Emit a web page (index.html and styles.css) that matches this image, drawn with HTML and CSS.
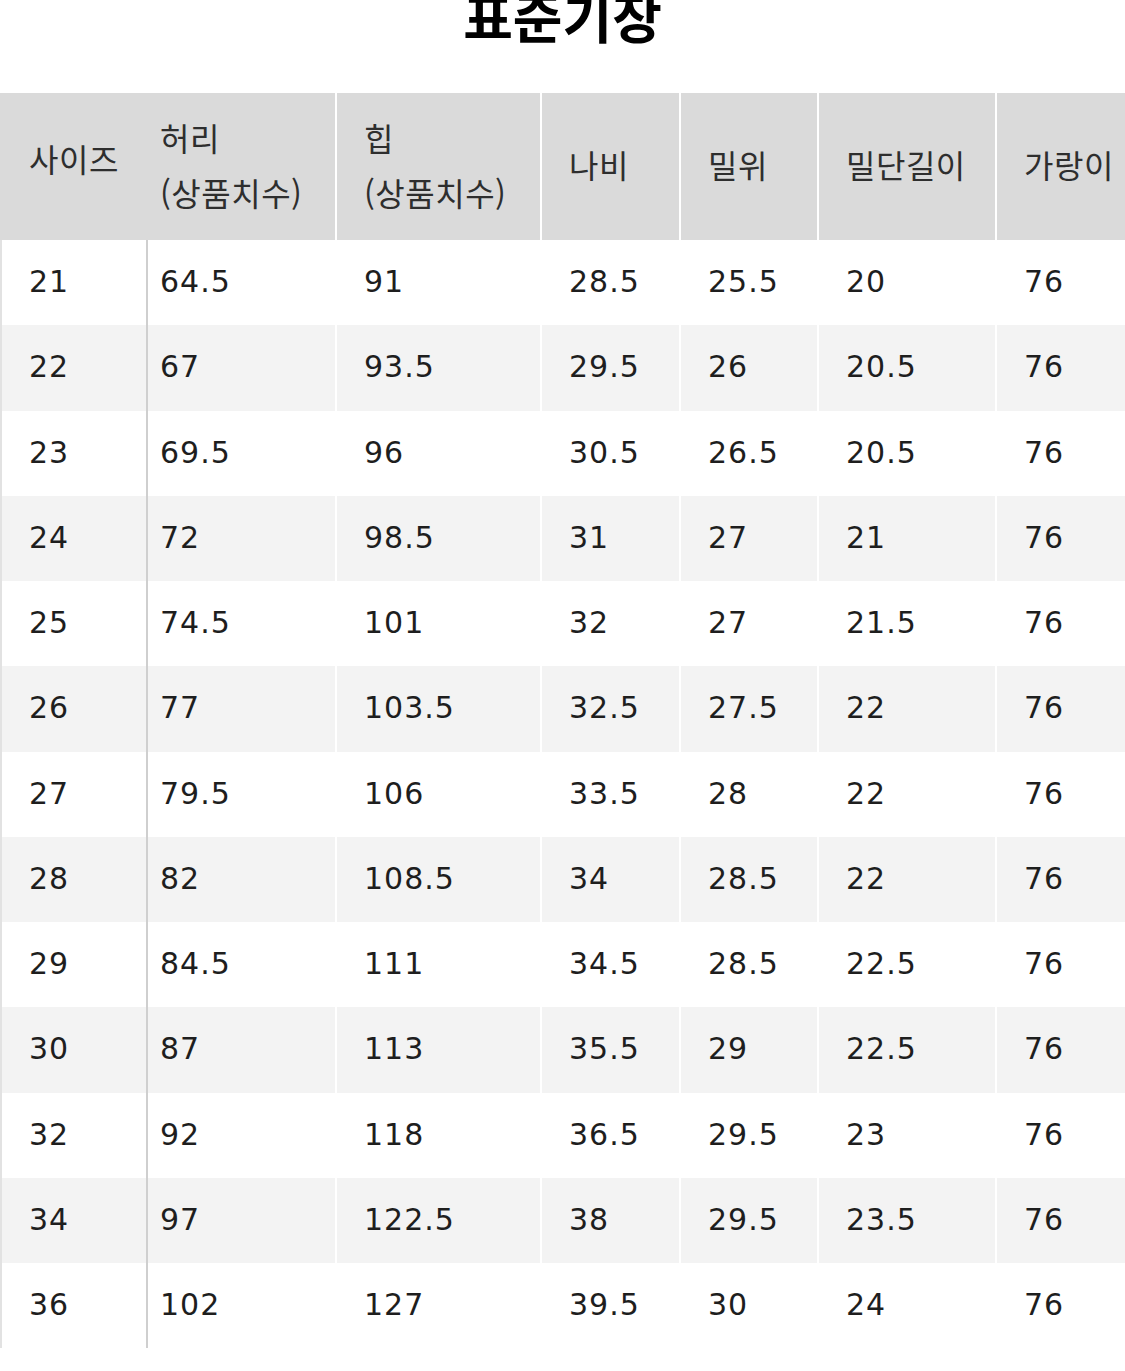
FILE: index.html
```html
<!DOCTYPE html>
<html lang="ko">
<head>
<meta charset="utf-8">
<title>표준기장</title>
<link rel="stylesheet" href="styles.css">
</head>
<body>
<div class="title-wrap"><h1 class="title">표준기장</h1></div>
<table class="size-table">
  <colgroup>
    <col class="c1"><col class="c2"><col class="c3"><col class="c4"><col class="c5"><col class="c6"><col class="c7">
  </colgroup>
  <thead>
    <tr>
      <th class="first">사이즈</th>
      <th class="second">허리<br>(상품치수)</th>
      <th>힙<br>(상품치수)</th>
      <th>나비</th>
      <th>밀위</th>
      <th>밀단길이</th>
      <th>가랑이</th>
    </tr>
  </thead>
  <tbody>
    <tr><td class="first">21</td><td class="second">64.5</td><td>91</td><td>28.5</td><td>25.5</td><td>20</td><td>76</td></tr>
    <tr><td class="first">22</td><td class="second">67</td><td>93.5</td><td>29.5</td><td>26</td><td>20.5</td><td>76</td></tr>
    <tr><td class="first">23</td><td class="second">69.5</td><td>96</td><td>30.5</td><td>26.5</td><td>20.5</td><td>76</td></tr>
    <tr><td class="first">24</td><td class="second">72</td><td>98.5</td><td>31</td><td>27</td><td>21</td><td>76</td></tr>
    <tr><td class="first">25</td><td class="second">74.5</td><td>101</td><td>32</td><td>27</td><td>21.5</td><td>76</td></tr>
    <tr><td class="first">26</td><td class="second">77</td><td>103.5</td><td>32.5</td><td>27.5</td><td>22</td><td>76</td></tr>
    <tr><td class="first">27</td><td class="second">79.5</td><td>106</td><td>33.5</td><td>28</td><td>22</td><td>76</td></tr>
    <tr><td class="first">28</td><td class="second">82</td><td>108.5</td><td>34</td><td>28.5</td><td>22</td><td>76</td></tr>
    <tr><td class="first">29</td><td class="second">84.5</td><td>111</td><td>34.5</td><td>28.5</td><td>22.5</td><td>76</td></tr>
    <tr><td class="first">30</td><td class="second">87</td><td>113</td><td>35.5</td><td>29</td><td>22.5</td><td>76</td></tr>
    <tr><td class="first">32</td><td class="second">92</td><td>118</td><td>36.5</td><td>29.5</td><td>23</td><td>76</td></tr>
    <tr><td class="first">34</td><td class="second">97</td><td>122.5</td><td>38</td><td>29.5</td><td>23.5</td><td>76</td></tr>
    <tr><td class="first">36</td><td class="second">102</td><td>127</td><td>39.5</td><td>30</td><td>24</td><td>76</td></tr>
  </tbody>
</table>
</body>
</html>
```
FILE: styles.css
```css
html, body {
  margin: 0;
  padding: 0;
  background: #fff;
  overflow: hidden;
}
body {
  width: 1125px;
  font-family: "DejaVu Sans", "Noto Sans CJK KR", sans-serif;
  color: #222;
}
.title-wrap {
  display: flow-root;
  height: 93px;
}
.title {
  margin: -11px 0 0 0;
  font-family: "Noto Sans CJK KR", sans-serif;
  font-size: 54px;
  line-height: 54px;
  font-weight: 700;
  text-align: center;
  color: #000;
}
.size-table {
  table-layout: fixed;
  border-collapse: separate;
  border-spacing: 0;
  width: 1135px;
  font-size: 30px;
}
.c1 { width: 148px; }
.c2 { width: 187px; }
.c3 { width: 205px; }
.c4 { width: 139px; }
.c5 { width: 138px; }
.c6 { width: 178px; }
.c7 { width: 140px; }
.size-table th,
.size-table td {
  box-sizing: border-box;
  text-align: left;
  vertical-align: middle;
  padding: 0 0 0 27px;
  border-left: 2px solid #fff;
  white-space: nowrap;
  overflow: hidden;
}
.size-table th {
  height: 147px;
  background: #dadada;
  font-family: "Noto Sans CJK KR", sans-serif;
  font-weight: 400;
  font-size: 32px;
  letter-spacing: 0.5px;
  line-height: 55px;
  color: #2e2e2e;
  padding-bottom: 4px;
}
.size-table th.first {
  border-left: 0;
  padding-left: 29px;
  padding-bottom: 16px;
}
.size-table th.second {
  border-left: 0;
  padding-left: 12px;
}
.size-table td {
  height: 85.25px;
  letter-spacing: 1px;
  padding-bottom: 2px;
  color: #1e1e1e;
}
.size-table td.first {
  border-left: 2px solid #e2e2e2;
  border-right: 2px solid #cfcfcf;
  padding-left: 27px;
}
.size-table td.second {
  border-left: 0;
  padding-left: 12px;
}
.size-table tbody tr:nth-child(even) td {
  background: #f3f3f3;
}
.size-table tbody tr:nth-child(odd) td {
  background: #fff;
}
```
